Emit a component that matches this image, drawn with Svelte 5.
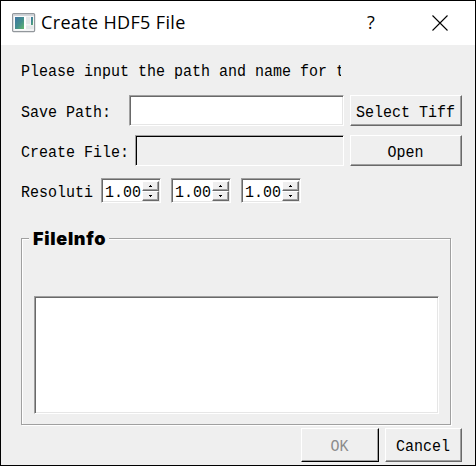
<script>
  const resolution = ['1.00', '1.00', '1.00'];
</script>

<div class="window">
  <header>
    <svg class="app" width="24" height="20" viewBox="0 0 24 20">
      <defs>
        <linearGradient id="screen" x1="0" y1="0" x2="1" y2="1">
          <stop offset="0" stop-color="#3f75a5" />
          <stop offset=".55" stop-color="#438f8c" />
          <stop offset="1" stop-color="#65b96c" />
        </linearGradient>
      </defs>
      <rect x=".6" y=".6" width="22" height="18" rx="1" fill="#f3f4f5" stroke="#92979c" stroke-width="1.2" />
      <path d="M1.5 2H22" stroke="#c3c8cd" stroke-width="1.4" />
      <rect x="2.5" y="3.5" width="11.5" height="13" fill="#fff" />
      <rect x="3" y="4" width="9" height="12" fill="url(#screen)" />
      <rect x="14" y="4" width="4" height="7" fill="#e4e7e8" />
      <rect x="14" y="12.5" width="7.5" height="3.5" fill="#e4e7e8" />
      <rect x="19" y="4" width="2" height="8" fill="url(#screen)" />
    </svg>
    <h1>Create HDF5 File</h1>
    <span class="help">?</span>
    <svg class="close" width="16" height="16" viewBox="0 0 16 16"><path d="M.5.5l15 15M15.5.5l-15 15" stroke="#000" stroke-width="1.1" /></svg>
  </header>
  <main>
    <div class="intro"><span class="t">Please input the path and name for t</span></div>
    <div class="row">
      <label for="save" class="save"><span class="t">Save Path:</span></label>
      <input id="save" class="sunken" />
      <button><span class="t">Select Tiff</span></button>
    </div>
    <div class="row second">
      <label for="file" class="file"><span class="t">Create File:</span></label>
      <input id="file" class="sunken off" disabled />
      <button><span class="t">Open</span></button>
    </div>
    <div class="resolution">
      <span class="reslabel"><span class="t">Resoluti</span></span>
      {#each resolution as value}
        <div class="spin sunken">
          <span class="t">{value}</span>
          <div class="steps">
            <i><svg width="3" height="2" viewBox="0 0 3 2"><path d="M1 0h1v1h1v1H0V1h1z" /></svg></i>
            <i><svg width="3" height="2" viewBox="0 0 3 2"><path d="M0 0h3v1H2v1H1V1H0z" /></svg></i>
          </div>
        </div>
      {/each}
    </div>
    <section class="group">
      <h2>FileInfo</h2>
      <div class="info sunken"></div>
    </section>
    <footer>
      <button class="ok" disabled><span class="t">OK</span></button>
      <button class="cancel"><span class="t">Cancel</span></button>
    </footer>
  </main>
</div>

<style>
  .window {
    box-sizing: border-box;
    width: 476px;
    height: 466px;
    border: 1px solid #000;
    background: #efefef;
    color: #000;
    overflow: hidden;
  }
  header {
    display: flex;
    align-items: center;
    box-sizing: border-box;
    height: 44px;
    padding: 0 27px 0 11px;
    background: #fff;
  }
  .app { flex: none; }
  h1 {
    flex: 1;
    margin: 0 0 2px 5px;
    font: 400 18px/24px "Open Sans", "Noto Sans", sans-serif;
    letter-spacing: 0.35px;
    white-space: nowrap;
  }
  .help {
    width: 10px;
    margin: 0 56px 2px 0;
    font: 400 18px/24px "Open Sans", "Noto Sans", sans-serif;
    text-align: center;
  }
  .close { flex: none; margin-bottom: 1px; }
  main { padding: 17px 13px 0 20px; }
  .t {
    display: inline-block;
    padding-top: 4px;
    font: 400 15px/18px "Liberation Mono", monospace;
    white-space: pre;
    transform: scaleY(1.15);
  }
  .intro {
    display: flex;
    width: 320px;
    height: 22px;
    overflow: hidden;
  }
  .intro .t { padding-top: 2px; }
  .row {
    display: flex;
    align-items: center;
    height: 31px;
    margin-top: 11px;
  }
  .row.second { margin-top: 9px; }
  label { display: flex; flex: none; }
  .save { width: 108px; }
  .file { width: 114px; }
  .sunken {
    box-sizing: border-box;
    border: 1px solid;
    border-color: #a0a0a0 #fff #fff #a0a0a0;
    box-shadow: inset 1px 1px #696969, inset -1px -1px #e6e6e6;
    background: #fff;
  }
  input {
    flex: 1;
    min-width: 0;
    height: 31px;
    margin: 0 6px 0 0;
    padding: 0 4px;
    border-radius: 0;
    outline: 0;
  }
  input.off {
    background: #efefef;
    box-shadow: inset 1px 1px #000, inset -1px -1px #efefef;
  }
  button {
    display: flex;
    align-items: center;
    justify-content: center;
    box-sizing: border-box;
    flex: none;
    width: 112px;
    height: 31px;
    padding: 0 1px 0 0;
    border: 1px solid;
    border-color: #fff #696969 #696969 #fff;
    box-shadow: inset -1px -1px #a0a0a0;
    background: #efefef;
    color: #000;
  }
  .resolution {
    display: flex;
    align-items: center;
    gap: 10px;
    height: 25px;
    margin-top: 12px;
  }
  .reslabel { display: flex; width: 71px; margin-right: -1px; }
  .spin {
    display: flex;
    align-items: center;
    justify-content: space-between;
    width: 60px;
    height: 25px;
    padding: 1px 1px 1px 3px;
  }
  .steps { width: 17px; height: 20px; }
  .steps i {
    display: flex;
    align-items: center;
    justify-content: center;
    box-sizing: border-box;
    height: 10px;
    border: 1px solid;
    border-color: #fff #696969 #696969 #fff;
    box-shadow: inset -1px -1px #a0a0a0;
    background: #efefef;
  }
  .group {
    box-sizing: border-box;
    width: 430px;
    height: 187px;
    margin-top: 35px;
    padding: 0 11px 0 12px;
    border: 1px solid #a0a0a0;
    box-shadow: inset 1px 1px #fff, 1px 1px #fff;
  }
  h2 {
    width: 80px;
    height: 24px;
    margin: -12px 0 0 -5px;
    box-sizing: border-box;
    padding-left: 4px;
    background: #efefef;
    font: 900 18px/23px Inter, "Liberation Sans", sans-serif;
    letter-spacing: 0.7px;
    white-space: nowrap;
  }
  .info { height: 118px; margin-top: 45px; width: 405px; }
  footer {
    display: flex;
    justify-content: flex-end;
    gap: 6px;
    margin-top: 3px;
  }
  footer button { height: 34px; }
  footer .t { padding-top: 3px; }
  .cancel { width: 77px; }
  .ok {
    width: 78px;
    border-right-color: #000;
    border-bottom-color: #000;
    color: #8b8b8b;
  }
</style>
